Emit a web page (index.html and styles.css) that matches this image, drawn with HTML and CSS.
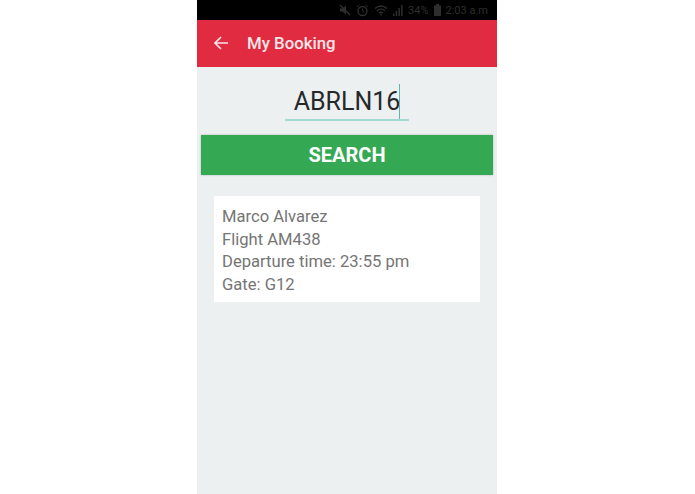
FILE: index.html
```html
<!DOCTYPE html>
<html>
<head>
    <title>My Booking</title>
    <link rel="stylesheet" href="styles.css">
</head>
<body>
    <div class="phone">
        <div class="status-bar">
            <svg class="status-icon" width="12" height="12" viewBox="0 0 12 12">
                <path d="M1 4.500h2.500L7 1.500v9L3.500 7.500H1z" fill="#2e2e2e"/>
                <path d="M1 1l10 10" stroke="#2e2e2e" stroke-width="1.400"/>
            </svg>
            <svg class="status-icon" width="13" height="13" viewBox="0 0 13 13">
                <circle cx="6.500" cy="7" r="4.500" fill="none" stroke="#2e2e2e" stroke-width="1.300"/>
                <path d="M6.500 4.500V7l1.800 1.200M1 3l2.500-2M12 3L9.500 1" fill="none" stroke="#2e2e2e" stroke-width="1"/>
            </svg>
            <svg class="status-icon" width="14" height="12" viewBox="0 0 14 12">
                <path d="M1 4.500a8.500 8.500 0 0 1 12 0M3 6.800a5.600 5.600 0 0 1 8 0M5 9a2.800 2.800 0 0 1 4 0" fill="none" stroke="#2e2e2e" stroke-width="1.300"/>
                <circle cx="7" cy="10.500" r="1" fill="#2e2e2e"/>
            </svg>
            <svg class="status-icon" width="10" height="12" viewBox="0 0 10 12">
                <path d="M0 12V9.500h1.500V12zM2.700 12V7h1.500v5zM5.400 12V4h1.500v8zM8.100 12V1h1.500v11z" fill="#2e2e2e"/>
            </svg>
            <span class="status-text">34%</span>
            <svg class="status-icon" width="7" height="12" viewBox="0 0 7 12">
                <path d="M2 0h3v1.500h2V12H0V1.500h2z" fill="#2e2e2e"/>
            </svg>
            <span class="status-text">2:03 a.m</span>
        </div>
        <div class="app-bar">
            <svg class="back-icon" width="16" height="16" viewBox="0 0 16 16">
                <path d="M15 8H2M8 2L2 8l6 6" fill="none" stroke="#fbe6e9" stroke-width="1.700"/>
            </svg>
            <span class="app-title">My Booking</span>
        </div>
        <div class="content">
            <div class="code-field">
                <span class="code-text">ABRLN16</span><span class="caret"></span>
            </div>
            <div class="search-btn">SEARCH</div>
            <div class="result-card">
                <div>Marco Alvarez</div>
                <div>Flight AM438</div>
                <div>Departure time: 23:55 pm</div>
                <div>Gate: G12</div>
            </div>
        </div>
    </div>
</body>
</html>
```

FILE: styles.css
```css
html, body {
    height: 100%;
}

body {
    margin: 0;
    background-color: #fff;
    font-family: Roboto, Arial, sans-serif;
    overflow: hidden;
}

.phone {
    width: 300px;
    height: 494px;
    margin-left: 197px;
    display: flex;
    flex-direction: column;
    background-color: #ecf0f1;
}

.status-bar {
    height: 20px;
    flex-shrink: 0;
    background-color: #000;
    display: flex;
    align-items: center;
    justify-content: flex-end;
    gap: 5px;
    padding-right: 9px;
}

.status-text {
    color: #2e2e2e;
    font-size: 11px;
}

.app-bar {
    height: 47px;
    flex-shrink: 0;
    background-color: #e02b40;
    display: flex;
    align-items: center;
    padding-left: 16px;
}

.back-icon {
    margin-right: 18px;
    margin-bottom: 2px;
}

.app-title {
    color: #fbe6e9;
    font-size: 16.800px;
    font-weight: 500;
    margin-bottom: 1px;
}

.content {
    flex: 1;
    display: flex;
    flex-direction: column;
    align-items: center;
}

.code-field {
    width: 124px;
    height: 36px;
    margin-top: 16px;
    border-bottom: 2px solid #a3d9d0;
    display: flex;
    justify-content: center;
    align-items: center;
}

.code-text {
    color: #26282a;
    font-size: 25px;
    line-height: 36px;
    padding-top: 2px;
}

.caret {
    width: 1px;
    height: 35px;
    margin-left: -1px;
    background-color: #5fb5ac;
}

.search-btn {
    width: 292px;
    height: 40px;
    margin-top: 14px;
    background-color: #34a853;
    box-shadow: 0 0 2px rgba(0, 0, 0, 0.25);
    color: #fff;
    font-size: 20px;
    font-weight: 700;
    line-height: 41px;
    text-align: center;
}

.result-card {
    width: 266px;
    height: 106px;
    margin-top: 21px;
    box-sizing: border-box;
    padding: 10px 8px 0;
    background-color: #fff;
    color: #757575;
    font-size: 16.600px;
    line-height: 22.500px;
}
```
